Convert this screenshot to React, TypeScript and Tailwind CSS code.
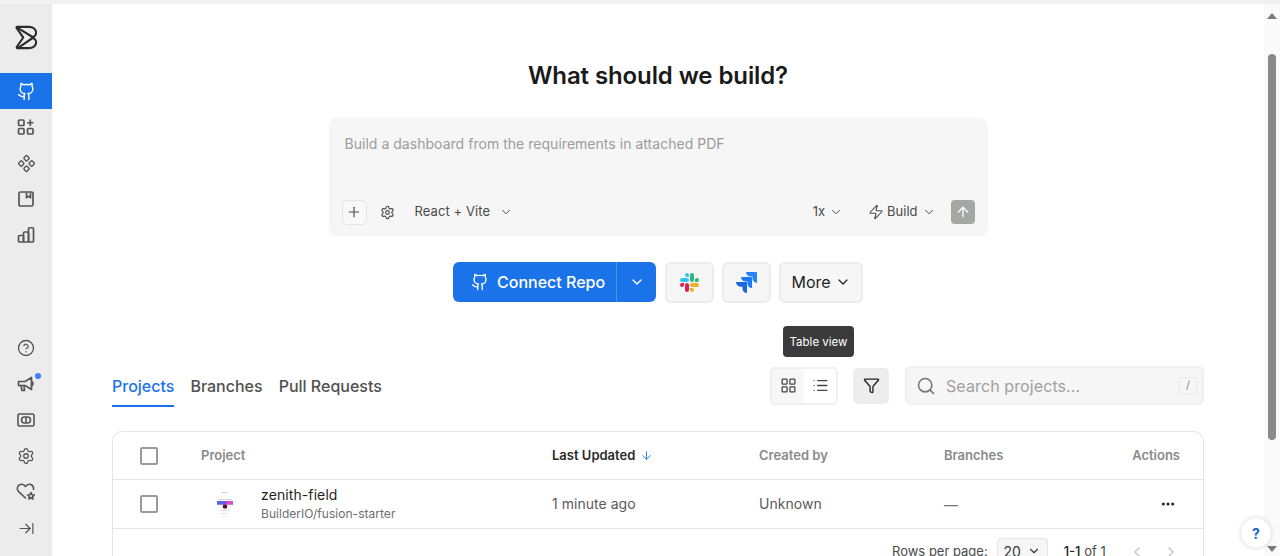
import { ArrowDown, ArrowRightToLine, ArrowUp, ChevronDown, ChevronLeft, ChevronRight, CircleHelp, Component, Ellipsis, Funnel, Github, LayoutGrid, List, Plus, Search, Settings, Zap } from "lucide-react";

const F = "font-['Inter','Liberation_Sans',sans-serif]";

function Logo() {
  return (
    <svg width="22" height="25" viewBox="0 0 24 26" preserveAspectRatio="none" fill="none" stroke="#2b2b2b" strokeWidth="2.200" strokeLinejoin="round" strokeLinecap="round">
      <path d="M2 2H15C20 2 23 4.500 23 8C23 10.500 21.500 12 18.500 13C21.500 14 23 15.500 23 18C23 21.500 20 24 15 24H3C1.500 24 1.500 23 2.500 22L9 13L2 3.500C1.500 2.800 1.500 2 2 2Z" />
      <path d="M2 2.500L20 13L3 24" />
    </svg>
  );
}

function AddGrid() {
  return (
    <svg width="18" height="18" viewBox="0 0 18 18" fill="none" stroke="#555" strokeWidth="1.700">
      <rect x="1.500" y="2" width="5.500" height="5.500" rx="1" />
      <rect x="1.500" y="10.500" width="5.500" height="5.500" rx="1" />
      <rect x="10.500" y="10.500" width="5.500" height="5.500" rx="1" />
      <path d="M13.250 1.500V8M10 4.750H16.500" />
    </svg>
  );
}

function BookBox() {
  return (
    <svg width="18" height="18" viewBox="0 0 18 18" fill="none" stroke="#555" strokeWidth="1.700">
      <rect x="2" y="2" width="14" height="14" rx="1.500" />
      <path d="M9.500 2.500V7.500L11.500 6.200L13.500 7.500V2.500" />
    </svg>
  );
}

function Bars() {
  return (
    <svg width="18" height="18" viewBox="0 0 18 18" fill="none" stroke="#555" strokeWidth="1.700" strokeLinejoin="round">
      <rect x="1.500" y="9.500" width="5" height="6.500" rx="1" />
      <rect x="6.500" y="6" width="5" height="10" rx="1" />
      <rect x="11.500" y="1.750" width="5" height="14.250" rx="1" />
    </svg>
  );
}

function Ticket() {
  return (
    <svg width="18" height="18" viewBox="0 0 18 18" fill="none" stroke="#555" strokeWidth="1.600">
      <rect x="1" y="3" width="16" height="12" rx="1.500" />
      <rect x="4.500" y="6" width="9" height="6" rx="3" />
      <path d="M9 6.200V11.800" />
    </svg>
  );
}

function HeartStar() {
  return (
    <svg width="20" height="18" viewBox="0 0 20 18" fill="none" stroke="#555" strokeWidth="1.600" strokeLinejoin="round" strokeLinecap="round">
      <path d="M9.500 15L2.800 8.800C0.300 6.300 1.200 2.500 4.200 1.500C6.200 0.900 8.300 1.700 9.500 3.500C10.700 1.700 12.800 0.900 14.800 1.500C16.800 2.200 17.800 4 17.500 6.500" />
      <path d="M15 9.500L16 11.700L18.300 12L16.600 13.600L17 16L15 14.800L13 16L13.400 13.600L11.700 12L14 11.700Z" />
    </svg>
  );
}

function Horn() {
  return (
    <svg width="18" height="18" viewBox="0 0 18 18" fill="none" stroke="#555" strokeWidth="1.700" strokeLinejoin="round" strokeLinecap="round">
      <path d="M1.500 6.500H8L14.500 2.500V14.500L8 10.500H1.500Z" />
      <path d="M4 10.500L5 15.500H7.500L7 10.500" />
      <path d="M14.500 6.500C16.500 6.800 16.500 10.200 14.500 10.500" />
    </svg>
  );
}

function Slack() {
  return (
    <svg width="19" height="19" viewBox="0 0 24 24">
      <path fill="#E01E5A" d="M5.042 15.165a2.528 2.528 0 0 1-2.52 2.523A2.528 2.528 0 0 1 0 15.165a2.527 2.527 0 0 1 2.522-2.52h2.52v2.52zM6.313 15.165a2.527 2.527 0 0 1 2.521-2.52 2.527 2.527 0 0 1 2.521 2.52v6.313A2.528 2.528 0 0 1 8.834 24a2.528 2.528 0 0 1-2.521-2.522v-6.313z" />
      <path fill="#36C5F0" d="M8.834 5.042a2.528 2.528 0 0 1-2.521-2.52A2.528 2.528 0 0 1 8.834 0a2.528 2.528 0 0 1 2.521 2.522v2.52H8.834zM8.834 6.313a2.528 2.528 0 0 1 2.521 2.521 2.528 2.528 0 0 1-2.521 2.521H2.522A2.528 2.528 0 0 1 0 8.834a2.528 2.528 0 0 1 2.522-2.521h6.312z" />
      <path fill="#2EB67D" d="M18.956 8.834a2.528 2.528 0 0 1 2.522-2.521A2.528 2.528 0 0 1 24 8.834a2.528 2.528 0 0 1-2.522 2.521h-2.522V8.834zM17.688 8.834a2.528 2.528 0 0 1-2.523 2.521 2.527 2.527 0 0 1-2.52-2.521V2.522A2.527 2.527 0 0 1 15.165 0a2.528 2.528 0 0 1 2.523 2.522v6.312z" />
      <path fill="#ECB22E" d="M15.165 18.956a2.528 2.528 0 0 1 2.523 2.522A2.528 2.528 0 0 1 15.165 24a2.527 2.527 0 0 1-2.52-2.522v-2.522h2.52zM15.165 17.688a2.527 2.527 0 0 1-2.52-2.523 2.526 2.526 0 0 1 2.52-2.52h6.313A2.527 2.527 0 0 1 24 15.165a2.528 2.528 0 0 1-2.522 2.523h-6.313z" />
    </svg>
  );
}

function Jira() {
  return (
    <svg width="21" height="21" viewBox="0 0 24 24">
      <path fill="#1868DB" d="M11.571 11.513H0a5.218 5.218 0 0 0 5.232 5.215h2.13v2.057A5.215 5.215 0 0 0 12.575 24V12.518a1.005 1.005 0 0 0-1.005-1.005z" />
      <path fill="#1D7AFC" d="M17.294 5.757H5.736a5.215 5.215 0 0 0 5.215 5.214h2.129v2.058a5.218 5.218 0 0 0 5.215 5.214V6.758a1.001 1.001 0 0 0-1.001-1.001z" />
      <path fill="#2684FF" d="M23.013 0H11.455a5.215 5.215 0 0 0 5.215 5.215h2.129v2.057A5.215 5.215 0 0 0 24 12.483V1.005A1.001 1.001 0 0 0 23.013 0Z" />
    </svg>
  );
}

function Thumb() {
  return (
    <svg width="30" height="30" viewBox="0 0 30 30">
      <rect x="12" y="3" width="6" height="1" fill="#d8c8d8" />
      <rect x="8" y="10" width="14" height="1" fill="#d5d5e5" />
      <rect x="7" y="12" width="16" height="3.500" fill="#8a4fe0" />
      <rect x="7" y="12" width="7" height="3.500" fill="#5566e8" />
      <rect x="17" y="12" width="6" height="3.500" fill="#d84fc8" />
      <circle cx="15" cy="17.500" r="2.300" fill="#5a1030" />
      <rect x="10" y="21" width="10" height="1" fill="#e2e2e2" />
      <rect x="11" y="24" width="8" height="1" fill="#e8e8e8" />
      <rect x="12" y="26.500" width="6" height="1" fill="#eeeeee" />
    </svg>
  );
}

function Check() {
  return <div className="w-[18px] h-[18px] rounded-[2px] border-2 border-[#9a9a9a] bg-white" />;
}

function NavItem({ children, active }: { children: React.ReactNode; active?: boolean }) {
  return (
    <div className={`h-9 w-full flex items-center justify-center relative ${active ? "bg-[#1a73e8] text-white" : "text-[#555]"}`}>{children}</div>
  );
}

export default function App() {
  return (
    <div className={`${F} h-[556px] w-full overflow-hidden flex flex-col bg-white relative`}>
      <div className="h-[4px] bg-[#f1f1f1] shrink-0" />
      <div className="flex-1 min-h-0 flex">
        <aside className="w-[52px] shrink-0 bg-[#ececec] flex flex-col justify-between pb-[10px]">
          <div className="flex flex-col">
            <div className="h-[69px] flex items-center justify-center pb-[3px]"><Logo /></div>
            <NavItem active><Github size={19} strokeWidth={1.8} /></NavItem>
            <NavItem><AddGrid /></NavItem>
            <NavItem><Component size={19} strokeWidth={1.7} /></NavItem>
            <NavItem><BookBox /></NavItem>
            <NavItem><Bars /></NavItem>
          </div>
          <div className="flex flex-col">
            <NavItem><CircleHelp size={18} strokeWidth={1.7} /></NavItem>
            <NavItem>
              <Horn />
              <span className="absolute top-[7px] right-[11px] w-[6px] h-[6px] rounded-full bg-[#3b82f6]" />
            </NavItem>
            <NavItem><Ticket /></NavItem>
            <NavItem><Settings size={18} strokeWidth={1.7} /></NavItem>
            <NavItem><HeartStar /></NavItem>
            <NavItem><ArrowRightToLine size={17} strokeWidth={1.7} /></NavItem>
          </div>
        </aside>

        <main className="flex-1 min-w-0 flex flex-col items-center pt-[54px] px-[60px] overflow-hidden">
          <h1 className="shrink-0 text-[24px] leading-[36px] font-semibold text-[#1a1a1a] tracking-[-0.1px]">What should we build?</h1>

          <div className="shrink-0 mt-[24px] w-[659px] h-[118px] rounded-[8px] bg-[#f6f6f6] pl-[13px] pr-[13px] flex flex-col justify-between pb-[11px] pt-[16px]">
            <div className="pl-[3px] text-[14px] leading-[20px] text-[#9c9c9c] tracking-[0.03px]">Build a dashboard from the requirements in attached PDF</div>
            <div className="flex items-center h-[26px] text-[13px] text-[#4a4a4a]">
              <div className="w-[25px] h-[25px] rounded-[5px] border border-[#e4e4e4] bg-[#f8f8f8] flex items-center justify-center"><Plus size={16} strokeWidth={1.7} /></div>
              <Settings size={15} strokeWidth={1.8} className="ml-[13px]" />
              <span className="ml-[20px] tracking-[0.08px]">React + Vite</span>
              <ChevronDown size={14} strokeWidth={1.7} className="ml-[9px]" />
              <span className="ml-auto">1x</span>
              <ChevronDown size={14} strokeWidth={1.7} className="ml-[4px]" />
              <Zap size={16} strokeWidth={1.6} className="ml-[25px]" />
              <span className="ml-[3px]">Build</span>
              <ChevronDown size={14} strokeWidth={1.7} className="ml-[4px]" />
              <div className="ml-[15px] w-[24px] h-[24px] rounded-[4px] bg-[#a3a8a5] flex items-center justify-center text-white"><ArrowUp size={16} strokeWidth={2} /></div>
            </div>
          </div>

          <div className="shrink-0 mt-[26px] flex items-center gap-[8px] h-[40px]">
            <div className="flex h-[40px] rounded-[6px] bg-[#1a73e8] text-white mr-[1px]">
              <div className="w-[164px] flex items-center pl-[18px] gap-[8px] border-r border-[#4f92ec]">
                <Github size={18} strokeWidth={1.8} />
                <span className="text-[16px] font-medium">Connect Repo</span>
              </div>
              <div className="w-[39px] flex items-center justify-center"><ChevronDown size={16} strokeWidth={2} /></div>
            </div>
            <div className="w-[49px] h-[41px] rounded-[6px] border-2 border-[#ececec] bg-[#f6f6f6] flex items-center justify-center"><Slack /></div>
            <div className="w-[49px] h-[41px] rounded-[6px] border-2 border-[#ececec] bg-[#f6f6f6] flex items-center justify-center"><Jira /></div>
            <div className="w-[84px] h-[41px] rounded-[6px] border-2 border-[#ececec] bg-[#f6f6f6] flex items-center justify-center gap-[4px] text-[#1f1f1f]">
              <span className="text-[16px]">More</span>
              <ChevronDown size={16} strokeWidth={1.8} />
            </div>
          </div>

          <div className="shrink-0 mt-[65px] w-full flex items-start h-[64px]">
            <div className="flex gap-[16px] text-[16px] font-medium text-[#505050]">
              <div className="text-[#1a73e8] h-[40px] pt-[6px] leading-[26px] border-b-2 border-[#1a73e8]">Projects</div>
              <div className="pt-[6px] leading-[26px]">Branches</div>
              <div className="pt-[6px] leading-[26px]">Pull Requests</div>
            </div>
            <div className="ml-auto flex items-center -mt-[1px]">
              <div className="w-[68px] h-[38px] rounded-[5px] border-2 border-[#efefef] flex overflow-hidden">
                <div className="flex-1 bg-[#f7f7f7] flex items-center justify-center text-[#444]"><LayoutGrid size={17} strokeWidth={1.8} /></div>
                <div className="flex-1 bg-white flex items-center justify-center text-[#444]"><List size={17} strokeWidth={1.8} /></div>
              </div>
              <div className="ml-[15px] w-[36px] h-[36px] rounded-[5px] bg-[#ededed] flex items-center justify-center text-[#222]"><Funnel size={17} strokeWidth={1.9} /></div>
              <div className="ml-[16px] w-[299px] h-[39px] rounded-[6px] border-2 border-[#efefef] bg-[#f6f6f6] flex items-center pl-[9px] pr-[5px]">
                <Search size={20} strokeWidth={1.9} className="text-[#757575]" />
                <span className="ml-[10px] text-[16px] text-[#a0a0a0] tracking-[0.1px]">Search projects...</span>
                <span className="ml-auto w-[18px] h-[18px] rounded-[3px] border border-[#e8e8e8] flex items-center justify-center text-[11px] text-[#8a8a8a]">/</span>
              </div>
            </div>
          </div>

          <div className="w-full border border-[#e4e4e4] rounded-t-[10px] border-b-0 text-[14px] shrink-0">
            <div className="grid grid-cols-[88px_351px_207px_185px_1fr] items-center h-[48px] border-b border-[#e4e4e4] font-semibold text-[13px] text-[#8a8a8a]">
              <div className="pl-[27px]"><Check /></div>
              <div>Project</div>
              <div className="flex items-center gap-[5px] text-[#2a2a2a]">Last Updated <ArrowDown size={13} strokeWidth={1.7} className="text-[#1a73e8]" /></div>
              <div>Created by</div>
              <div className="flex"><span>Branches</span><span className="ml-auto pr-[23px]">Actions</span></div>
            </div>
            <div className="grid grid-cols-[88px_351px_207px_185px_1fr] items-center h-[49px] border-b border-[#e4e4e4] text-[#5a5a5a] tracking-[0.03px]">
              <div className="pl-[27px]"><Check /></div>
              <div className="flex items-center">
                <div className="ml-[9px] w-[30px] flex items-center justify-center"><Thumb /></div>
                <div className="ml-[21px] flex flex-col">
                  <span className="text-[14px] leading-[18px] text-[#1f1f1f] tracking-[0.1px]">zenith-field</span>
                  <span className="mt-[1px] text-[12px] leading-[18px] text-[#6e6e6e]">BuilderIO/fusion-starter</span>
                </div>
              </div>
              <div className="pb-[2px]">1 minute ago</div>
              <div className="pb-[2px]">Unknown</div>
              <div className="flex items-center">
                <span className="text-[#777]">—</span>
                <Ellipsis size={16} strokeWidth={2.6} className="ml-auto mr-[27px] text-[#1f1f1f]" />
              </div>
            </div>
            <div className="h-[48px] flex items-start pt-[10px] text-[13px] text-[#4a4a4a]">
              <span className="ml-[779px] leading-[24px]">Rows per page:</span>
              <div className="ml-[9px] -mt-[1px] w-[51px] h-[30px] rounded-[4px] border border-[#e4e4e4] bg-[#f6f6f6] flex items-start pt-[2px] justify-center gap-[6px] text-[14px] text-[#3a3a3a]">20<ChevronDown size={14} strokeWidth={2} className="mt-[3px]" /></div>
              <span className="ml-[16px] leading-[24px]"><span className="text-[#222] font-medium">1-1</span> of 1</span>
              <ChevronLeft size={16} className="ml-[23px] mt-[5px] text-[#c4c4c4]" />
              <ChevronRight size={16} className="ml-[18px] mt-[5px] text-[#c4c4c4]" />
            </div>
          </div>
        </main>

        <div className="w-[16px] shrink-0 bg-[#fafafa] flex flex-col items-center pt-[9px] pb-[4px]">
          <div className="w-0 h-0 border-x-[5px] border-x-transparent border-b-[6px] border-b-[#7a7a7a]" />
          <div className="mt-[35px] w-[8px] h-[386px] rounded-full bg-[#8a8a8a]" />
          <div className="mt-auto w-0 h-0 border-x-[5px] border-x-transparent border-t-[6px] border-t-[#7a7a7a]" />
        </div>
      </div>

      <div className="absolute left-[783px] top-[326px] w-[71px] h-[31px] rounded-[4px] bg-[#3b3b3b] text-white text-[11.5px] pt-[2px] flex items-center justify-center">Table view</div>
      <div className="absolute left-[1241px] top-[518px] w-[30px] h-[30px] rounded-full bg-white shadow-[0_0_4px_rgba(0,0,0,0.2)] flex items-center justify-center text-[#1a5fd0] text-[14px] font-bold">?</div>
    </div>
  );
}
